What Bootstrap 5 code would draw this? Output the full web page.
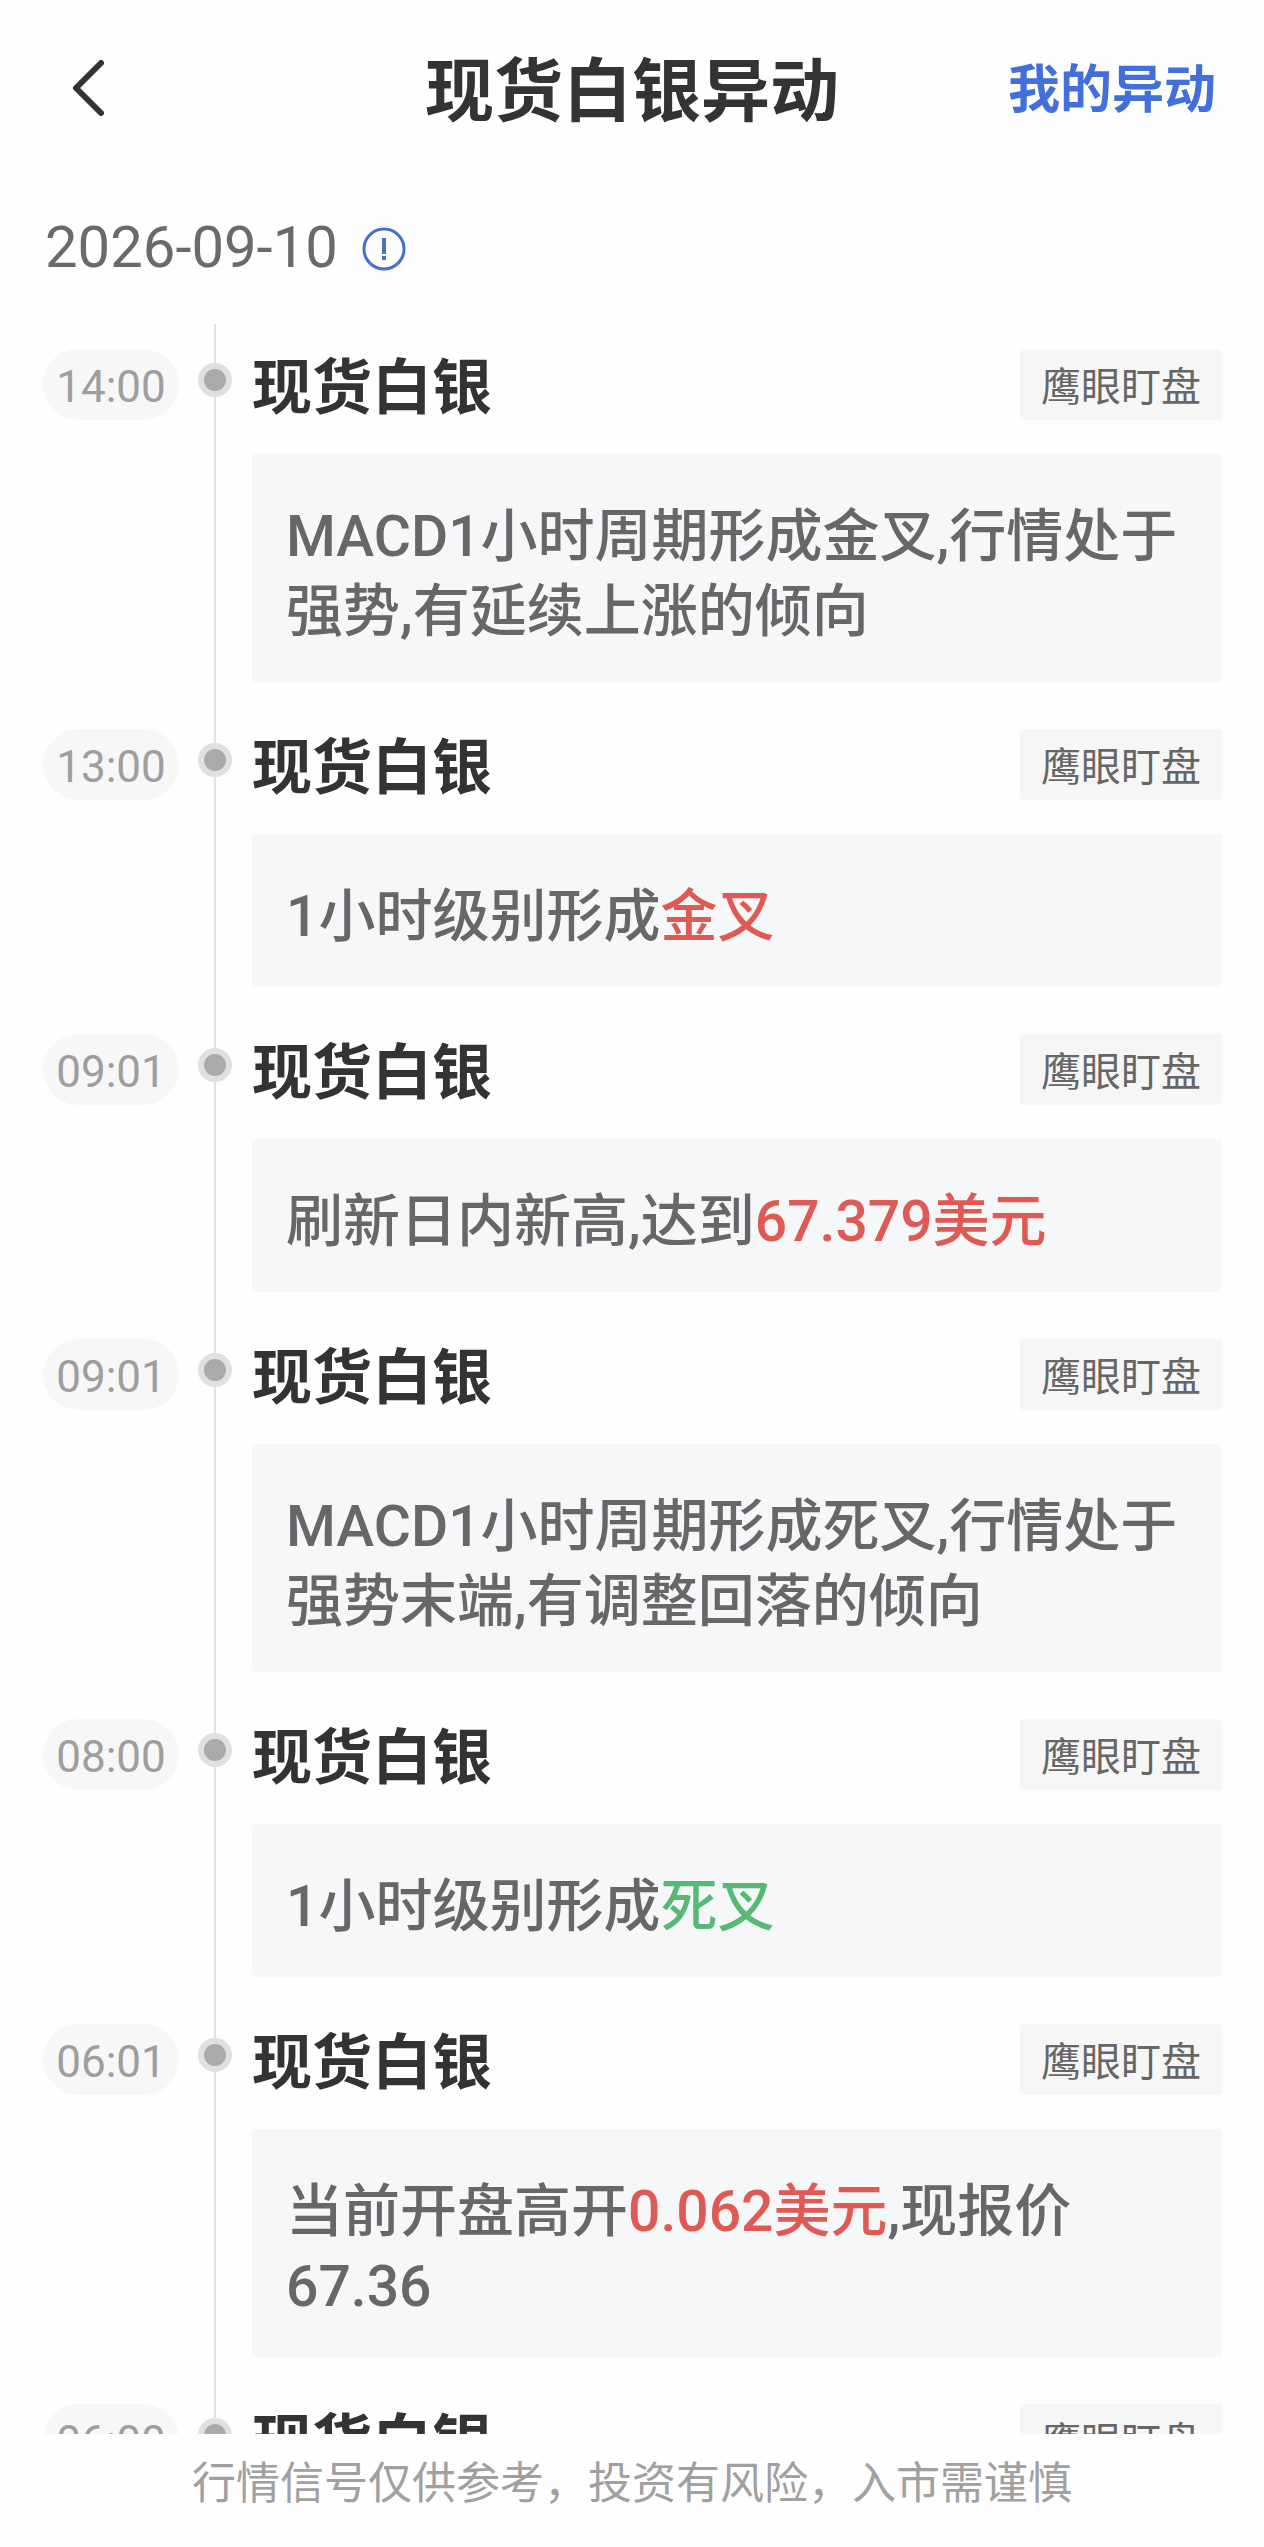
<!DOCTYPE html>
<html lang="zh-CN">
<head>
<meta charset="utf-8">
<meta name="viewport" content="width=device-width, initial-scale=1">
<title>现货白银异动</title>
<link href="https://cdn.jsdelivr.net/npm/bootstrap@5.3.0/dist/css/bootstrap.min.css" rel="stylesheet">
<style>
  body { font-family: "Noto Sans CJK SC", sans-serif; color: #333; background: #fefefe; }
  .topbar { height: 176px; padding: 0 48px 4px; }
  .topbar-side { flex: 1 1 0; }
  .page-title { font-size: 69px; line-height: 80px; font-weight: 700; }
  .back-btn { padding: 16px 24px 12px; line-height: 0; }
  .mine-link { font-size: 52px; line-height: 64px; font-weight: 700; color: #426fdb; }
  .date-row { height: 148px; padding: 0 45px 6px; gap: 24px; }
  .date-text { font-family: Roboto, "Noto Sans CJK SC", sans-serif; font-size: 58px; line-height: 72px; color: #6a6a6a; }
  .info-btn { line-height: 0; padding: 4px 0 0; }
  .event { padding: 0 42px 0 43px; }
  .time-col { width: 136px; padding-top: 25px; }
  .time-pill { font-family: Roboto, "Noto Sans CJK SC", sans-serif; height: 71px; padding-top: 5px; line-height: 66px; font-size: 44px; color: #9e9e9e; background: #f7f7f7; }
  .rail { width: 34px; margin: 0 20px 0 19px; }
  .rail-line { width: 2px; background: #e1e1e1; }
  .rail-top { height: 39px; }
  .rail-dot { width: 34px; height: 34px; background: #aaa; border: 6px solid #e0e0e0; }
  .event-body { padding: 25px 0 22px; min-width: 0; }
  .event-head { height: 71px; margin-bottom: 34px; }
  .event-name { font-size: 60px; line-height: 68px; font-weight: 700; }
  .event-tag { font-size: 40px; line-height: 71px; padding: 0 21px; color: #666; background: #f6f6f6; border-radius: 4px; }
  .event-text { font-family: Roboto, "Noto Sans CJK SC", sans-serif; font-size: 57px; line-height: 75px; font-weight: 500; padding: 45px 20px 33px 34px; color: #666769; background: #f6f7f9; border-radius: 4px; }
  .rise { color: #df5a54; }
  .fall { color: #56ba75; }
  .disclaimer { height: 113px; padding-top: 14px; font-size: 44px; line-height: 64px; color: #a0a0a0; }
</style>
</head>
<body>
<div class="d-flex flex-column vh-100">
  <header class="topbar d-flex align-items-center flex-shrink-0">
    <div class="topbar-side">
      <button type="button" class="back-btn btn border-0" aria-label="返回">
        <svg width="32" height="56" viewBox="0 0 32 56" fill="none" stroke="#333" stroke-width="6" stroke-linecap="round" stroke-linejoin="round"><path d="M29 3 4 28l25 25"/></svg>
      </button>
    </div>
    <h1 class="page-title mb-0 text-nowrap">现货白银异动</h1>
    <div class="topbar-side text-end"><a href="#" class="mine-link text-decoration-none text-nowrap">我的异动</a></div>
  </header>

  <div class="date-row d-flex align-items-center flex-shrink-0">
    <time class="date-text" datetime="2026-09-10">2026-09-10</time>
    <button type="button" class="info-btn btn border-0" aria-label="说明">
      <svg width="44" height="44" viewBox="0 0 44 44" fill="none" stroke="#4472ce"><circle cx="22" cy="22" r="20" stroke-width="3"/><path d="M22 11v16M22 29v4" stroke-width="4"/></svg>
    </button>
  </div>

  <main class="flex-grow-1 overflow-hidden">
    <ol class="list-unstyled mb-0">
      <li class="event d-flex">
        <div class="time-col flex-shrink-0"><time class="time-pill d-block text-center rounded-pill">14:00</time></div>
        <div class="rail d-flex flex-column align-items-center flex-shrink-0"><span class="rail-line rail-top"></span><span class="rail-dot rounded-circle"></span><span class="rail-line flex-grow-1"></span></div>
        <div class="event-body flex-grow-1">
          <div class="event-head d-flex justify-content-between"><h2 class="event-name mb-0">现货白银</h2><span class="event-tag">鹰眼盯盘</span></div>
          <p class="event-text mb-0">MACD1小时周期形成金叉,行情处于强势,有延续上涨的倾向</p>
        </div>
      </li>
      <li class="event d-flex">
        <div class="time-col flex-shrink-0"><time class="time-pill d-block text-center rounded-pill">13:00</time></div>
        <div class="rail d-flex flex-column align-items-center flex-shrink-0"><span class="rail-line rail-top"></span><span class="rail-dot rounded-circle"></span><span class="rail-line flex-grow-1"></span></div>
        <div class="event-body flex-grow-1">
          <div class="event-head d-flex justify-content-between"><h2 class="event-name mb-0">现货白银</h2><span class="event-tag">鹰眼盯盘</span></div>
          <p class="event-text mb-0">1小时级别形成<span class="rise">金叉</span></p>
        </div>
      </li>
      <li class="event d-flex">
        <div class="time-col flex-shrink-0"><time class="time-pill d-block text-center rounded-pill">09:01</time></div>
        <div class="rail d-flex flex-column align-items-center flex-shrink-0"><span class="rail-line rail-top"></span><span class="rail-dot rounded-circle"></span><span class="rail-line flex-grow-1"></span></div>
        <div class="event-body flex-grow-1">
          <div class="event-head d-flex justify-content-between"><h2 class="event-name mb-0">现货白银</h2><span class="event-tag">鹰眼盯盘</span></div>
          <p class="event-text mb-0">刷新日内新高,达到<span class="rise">67.379美元</span></p>
        </div>
      </li>
      <li class="event d-flex">
        <div class="time-col flex-shrink-0"><time class="time-pill d-block text-center rounded-pill">09:01</time></div>
        <div class="rail d-flex flex-column align-items-center flex-shrink-0"><span class="rail-line rail-top"></span><span class="rail-dot rounded-circle"></span><span class="rail-line flex-grow-1"></span></div>
        <div class="event-body flex-grow-1">
          <div class="event-head d-flex justify-content-between"><h2 class="event-name mb-0">现货白银</h2><span class="event-tag">鹰眼盯盘</span></div>
          <p class="event-text mb-0">MACD1小时周期形成死叉,行情处于强势末端,有调整回落的倾向</p>
        </div>
      </li>
      <li class="event d-flex">
        <div class="time-col flex-shrink-0"><time class="time-pill d-block text-center rounded-pill">08:00</time></div>
        <div class="rail d-flex flex-column align-items-center flex-shrink-0"><span class="rail-line rail-top"></span><span class="rail-dot rounded-circle"></span><span class="rail-line flex-grow-1"></span></div>
        <div class="event-body flex-grow-1">
          <div class="event-head d-flex justify-content-between"><h2 class="event-name mb-0">现货白银</h2><span class="event-tag">鹰眼盯盘</span></div>
          <p class="event-text mb-0">1小时级别形成<span class="fall">死叉</span></p>
        </div>
      </li>
      <li class="event d-flex">
        <div class="time-col flex-shrink-0"><time class="time-pill d-block text-center rounded-pill">06:01</time></div>
        <div class="rail d-flex flex-column align-items-center flex-shrink-0"><span class="rail-line rail-top"></span><span class="rail-dot rounded-circle"></span><span class="rail-line flex-grow-1"></span></div>
        <div class="event-body flex-grow-1">
          <div class="event-head d-flex justify-content-between"><h2 class="event-name mb-0">现货白银</h2><span class="event-tag">鹰眼盯盘</span></div>
          <p class="event-text mb-0">当前开盘高开<span class="rise">0.062美元</span>,现报价67.36</p>
        </div>
      </li>
      <li class="event d-flex">
        <div class="time-col flex-shrink-0"><time class="time-pill d-block text-center rounded-pill">06:00</time></div>
        <div class="rail d-flex flex-column align-items-center flex-shrink-0"><span class="rail-line rail-top"></span><span class="rail-dot rounded-circle"></span><span class="rail-line flex-grow-1"></span></div>
        <div class="event-body flex-grow-1">
          <div class="event-head d-flex justify-content-between"><h2 class="event-name mb-0">现货白银</h2><span class="event-tag">鹰眼盯盘</span></div>
        </div>
      </li>
    </ol>
  </main>

  <footer class="disclaimer text-center text-nowrap flex-shrink-0">行情信号仅供参考，投资有风险，入市需谨慎</footer>
</div>
<script src="https://cdn.jsdelivr.net/npm/bootstrap@5.3.0/dist/js/bootstrap.bundle.min.js"></script>
</body>
</html>
